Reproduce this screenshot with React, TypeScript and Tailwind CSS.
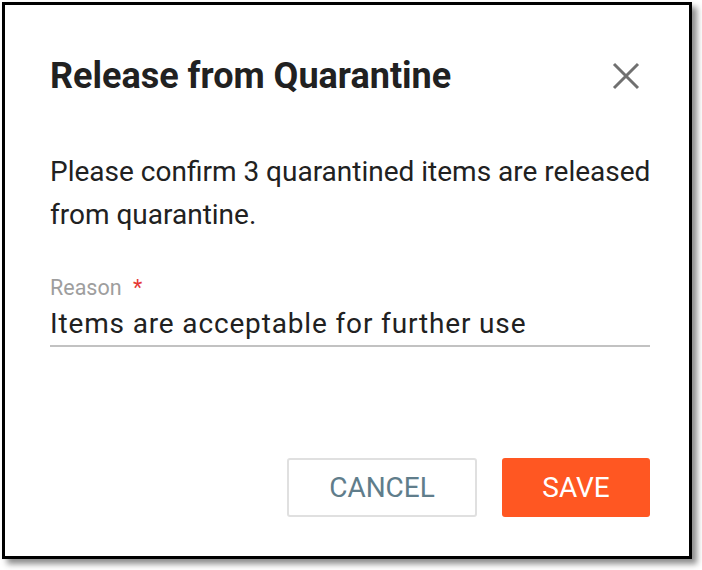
import React from 'react';

const ReleaseDialog: React.FC = () => {
  return (
    <div className="m-[2px] w-[690px] h-[557px] border-[3px] border-black bg-white shadow-[5px_5px_6px_rgba(0,0,0,0.45)] flex flex-col pl-[45px] pr-[39px] pt-[51px] pb-[39px] font-['Roboto',sans-serif]">
      <div className="flex items-center justify-between h-[40px]">
        <h1 className="text-[36px] leading-[40px] font-bold text-[#212121]">Release from Quarantine</h1>
        <button className="w-[28px] h-[28px] mr-[10px] text-[#707070]">
          <svg width="28" height="28" viewBox="0 0 28 28" fill="none" stroke="currentColor" strokeWidth={3}>
            <path d="M2 2l24 24M26 2L2 26" />
          </svg>
        </button>
      </div>

      <p className="mt-[54px] w-[610px] text-[28px] leading-[43px] text-[#212121]">
        Please confirm 3 quarantined items are released from quarantine.
      </p>

      <div className="mt-[39px] flex flex-col">
        <label className="text-[21.5px] leading-[26px] text-[#9e9e9e]">
          Reason <span className="ml-[6px] text-[#e53935]">*</span>
        </label>
        <div className="mt-[5px] pb-[3px] border-b-[2px] border-[#c2c2c2] text-[28px] leading-[36px] text-[#212121] tracking-[0.85px]">
          Items are acceptable for further use
        </div>
      </div>

      <div className="mt-auto flex justify-end gap-[25px]">
        <button className="w-[190px] h-[59px] rounded-[3px] border-2 border-[#e0e0e0] bg-white text-[#607d8b] text-[28px] leading-[32px]">
          CANCEL
        </button>
        <button className="w-[148px] h-[59px] rounded-[3px] bg-[#ff5722] text-white text-[28px] leading-[32px]">
          SAVE
        </button>
      </div>
    </div>
  );
};

export default function App() {
  return (
    <div className="w-[702px] h-[570px] bg-white">
      <ReleaseDialog />
    </div>
  );
}
